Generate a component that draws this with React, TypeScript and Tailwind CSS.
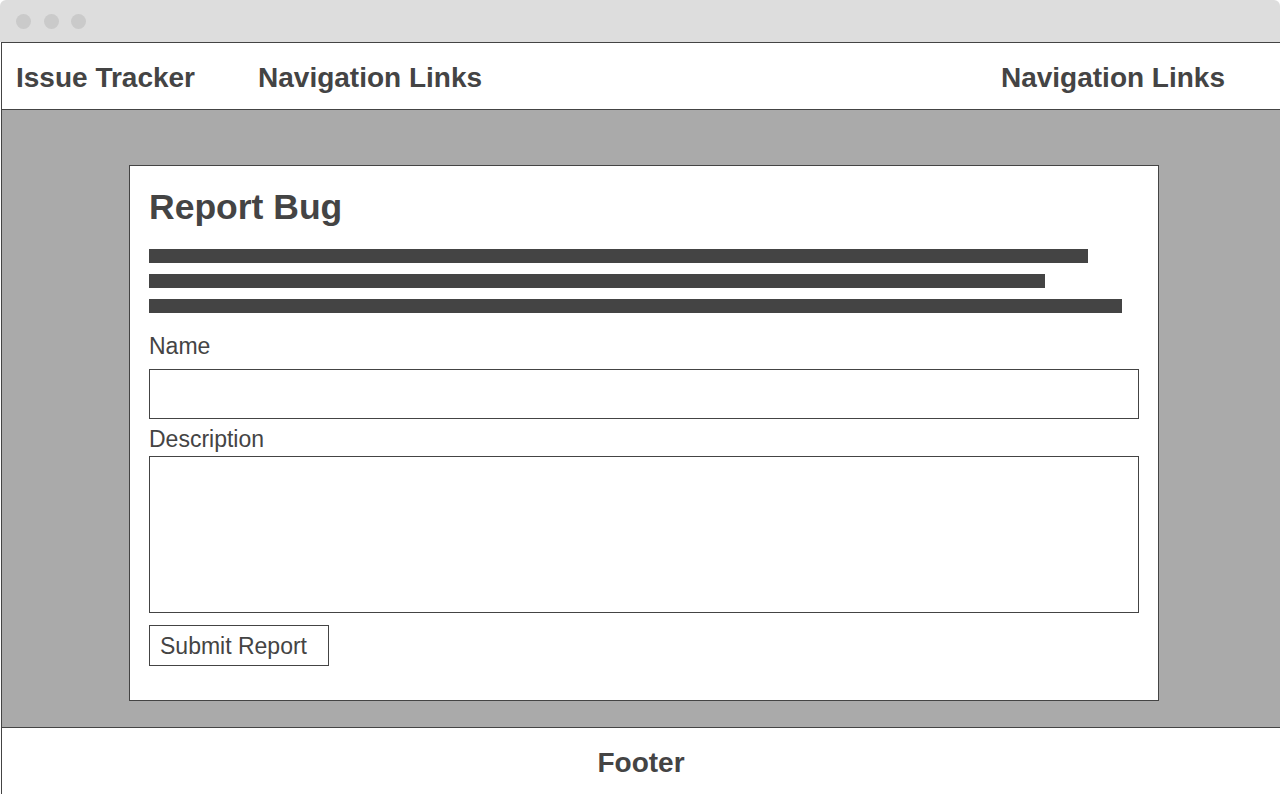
export default function App() {
  const bars = ["w-[939px]", "w-[896px]", "w-[973px]"];

  return (
    <div className="h-[794px] w-full overflow-hidden bg-white font-['Liberation_Sans',Arial,sans-serif] text-[#444]">
      {/* window chrome */}
      <div className="flex h-[42px] items-center rounded-t-[6px] bg-[#dddddd]">
        <span className="ml-[16px] h-[15px] w-[15px] rounded-full bg-[#cacaca]" />
        <span className="ml-[13px] h-[15px] w-[15px] rounded-full bg-[#cacaca]" />
        <span className="ml-[12px] h-[15px] w-[15px] rounded-full bg-[#cacaca]" />
      </div>

      <div className="ml-px border-l border-t border-[#444]">
        {/* header */}
        <header className="flex h-[67px] items-center border-b border-[#444] pl-[14px] pr-[55px] pt-[4px]">
          <span className="text-[28px] font-bold">Issue Tracker</span>
          <span className="ml-[63px] text-[28px] font-bold">Navigation Links</span>
          <span className="ml-auto text-[28px] font-bold">Navigation Links</span>
        </header>

        {/* main */}
        <main className="h-[618px] border-b border-[#444] bg-[#aaaaaa] pt-[55px]">
          <div className="ml-[127px] flex h-[536px] w-[1030px] flex-col border border-[#444] bg-white px-[19px] pt-[19px]">
            <h1 className="text-[35.5px] font-bold leading-[44px]">Report Bug</h1>

            <div className="mt-[20px] flex flex-col gap-[11px]">
              {bars.map((w) => (
                <div key={w} className={`h-[14px] bg-[#444] ${w}`} />
              ))}
            </div>

            <label className="mt-[21px] text-[23px] leading-[25px]">Name</label>
            <input
              type="text"
              className="mt-[10px] h-[50px] w-full border border-[#444] bg-white outline-none"
            />

            <label className="mt-[8px] text-[23px] leading-[25px]">Description</label>
            <textarea className="mt-[4px] h-[157px] w-full resize-none border border-[#444] bg-white outline-none" />

            <button
              type="button"
              className="mt-[12px] h-[41px] w-[180px] border border-[#444] bg-white pl-[10px] pt-[2px] text-left text-[23px] leading-[25px]"
            >
              Submit Report
            </button>
          </div>
        </main>

        {/* footer */}
        <footer className="flex h-[66px] items-center justify-center pt-[4px]">
          <span className="text-[28px] font-bold">Footer</span>
        </footer>
      </div>
    </div>
  );
}
